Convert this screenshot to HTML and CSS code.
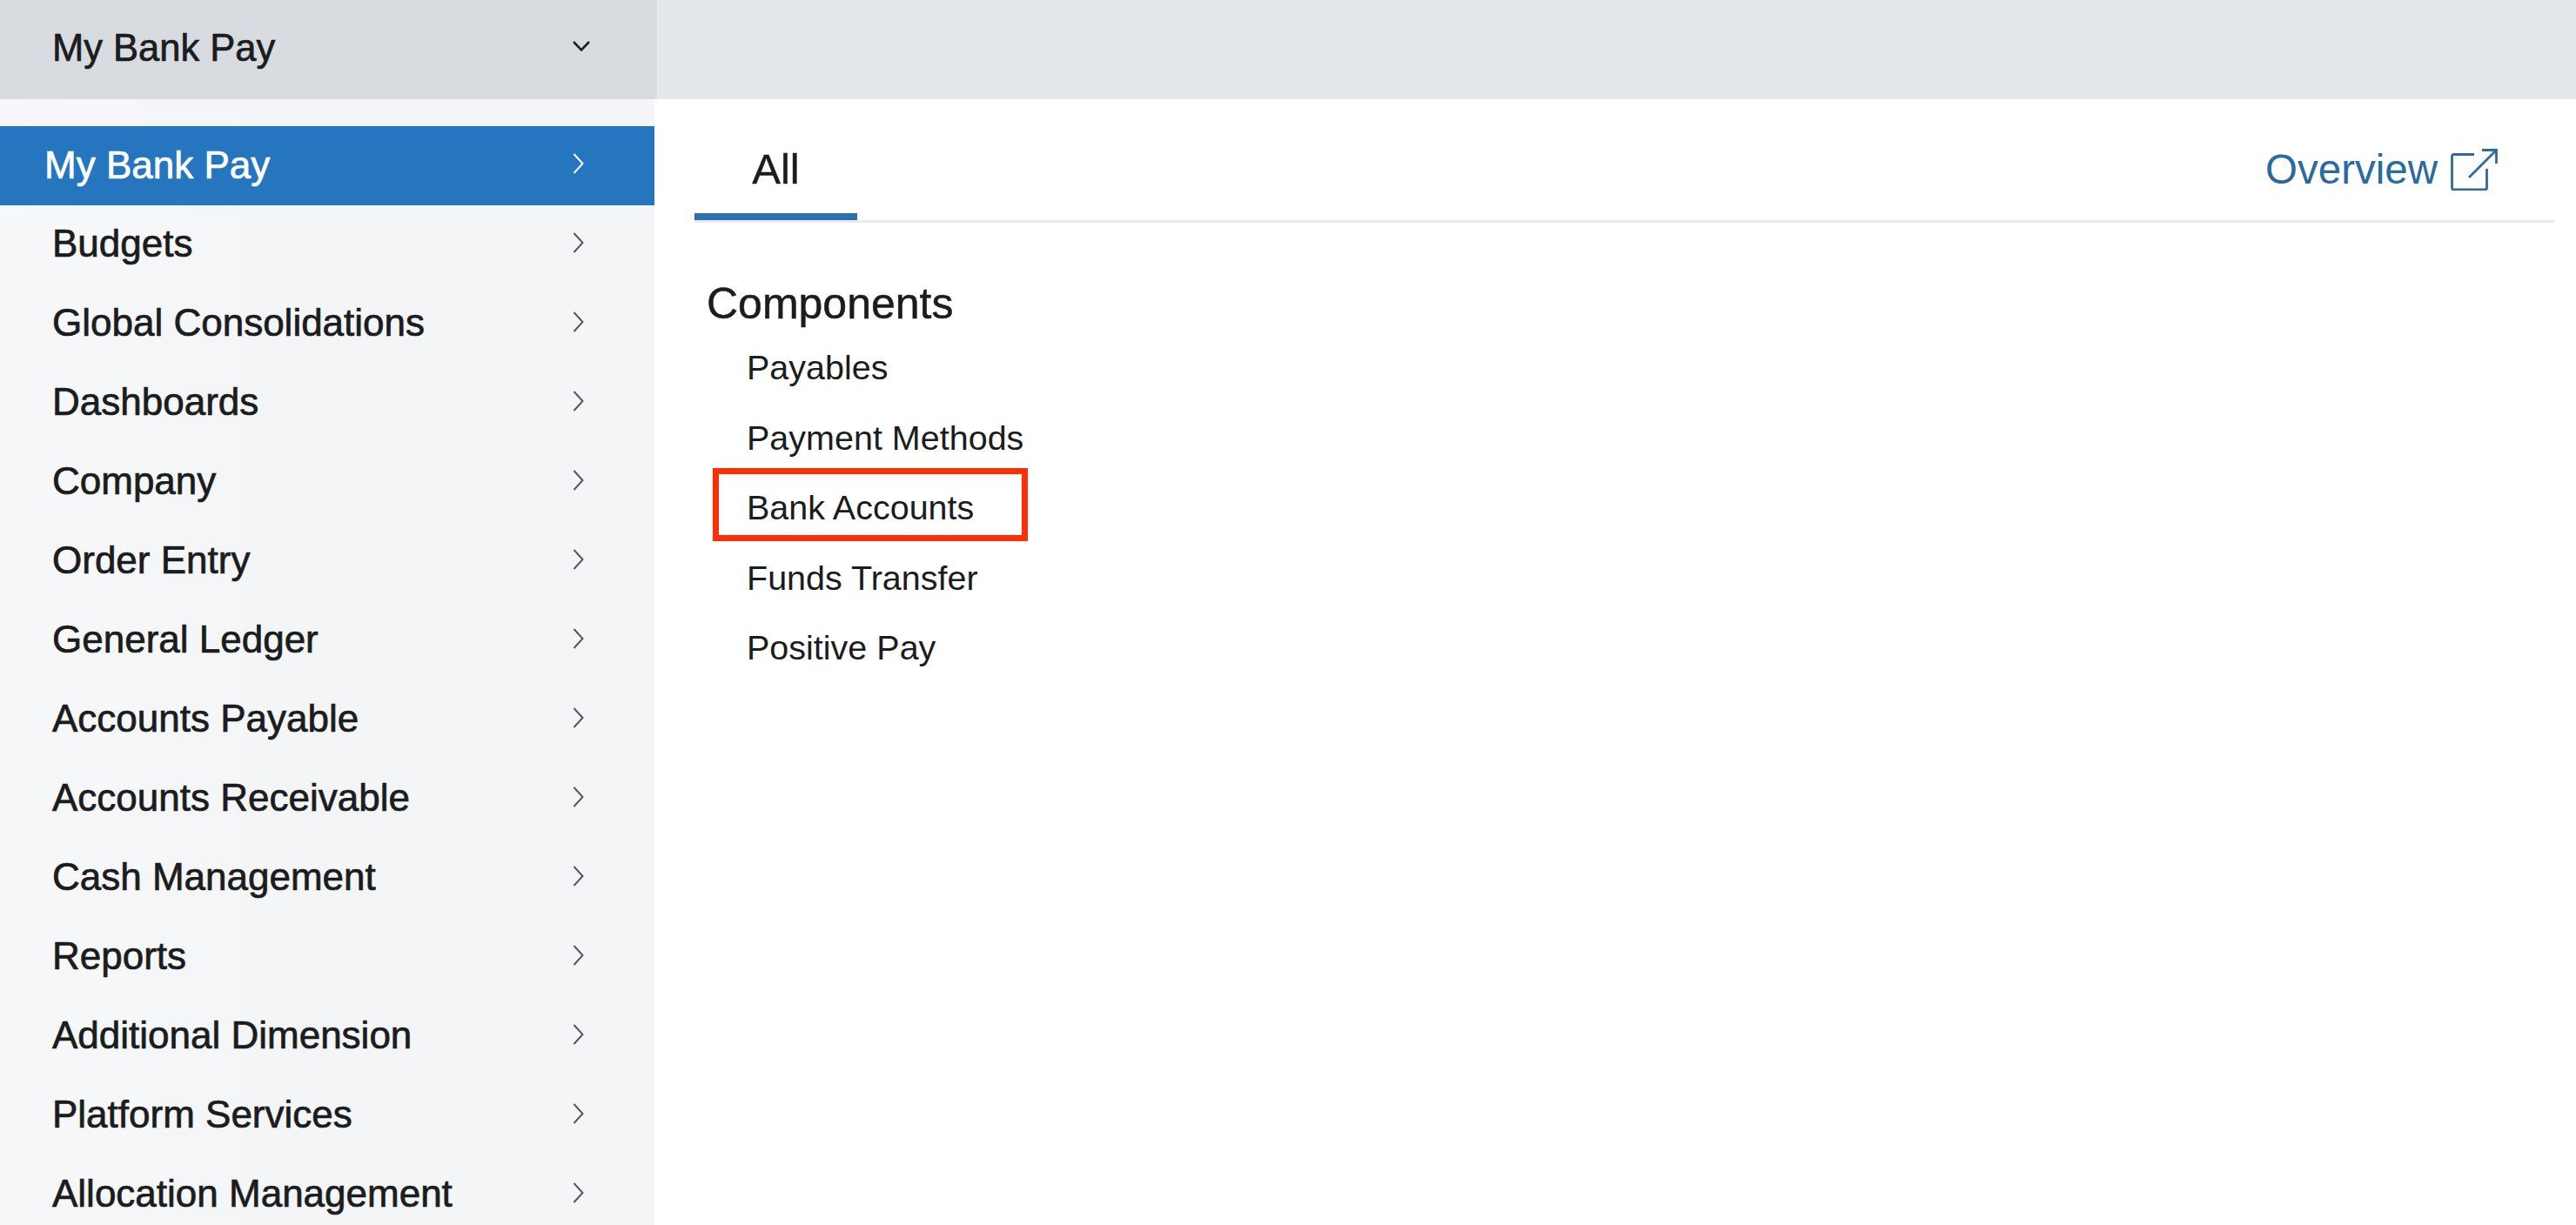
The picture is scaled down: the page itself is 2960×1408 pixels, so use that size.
FILE: index.html
```html
<!DOCTYPE html>
<html lang="en">
  <head>
    <meta charset="UTF-8" />
    <title>My Bank Pay</title>
    <link rel="stylesheet" href="styles.css">
  </head>
  <body>
    <header class="topbar">
      <div class="app-switch">
        <span class="app-name">My Bank Pay</span>
        <svg class="chevron-down" width="20" height="12" viewBox="0 0 20 12"><path d="M1 1l9 9.5L19 1" /></svg>
      </div>
      <div class="topbar-rest"></div>
    </header>

    <div class="layout">
      <nav class="sidebar">
        <a class="nav-item active"><span class="nav-label">My Bank Pay</span><svg class="chevron" width="13" height="24" viewBox="0 0 13 24"><path d="M1.500 1l10 11-10 11" /></svg></a>
        <a class="nav-item"><span class="nav-label">Budgets</span><svg class="chevron" width="13" height="24" viewBox="0 0 13 24"><path d="M1.500 1l10 11-10 11" /></svg></a>
        <a class="nav-item"><span class="nav-label">Global Consolidations</span><svg class="chevron" width="13" height="24" viewBox="0 0 13 24"><path d="M1.500 1l10 11-10 11" /></svg></a>
        <a class="nav-item"><span class="nav-label">Dashboards</span><svg class="chevron" width="13" height="24" viewBox="0 0 13 24"><path d="M1.500 1l10 11-10 11" /></svg></a>
        <a class="nav-item"><span class="nav-label">Company</span><svg class="chevron" width="13" height="24" viewBox="0 0 13 24"><path d="M1.500 1l10 11-10 11" /></svg></a>
        <a class="nav-item"><span class="nav-label">Order Entry</span><svg class="chevron" width="13" height="24" viewBox="0 0 13 24"><path d="M1.500 1l10 11-10 11" /></svg></a>
        <a class="nav-item"><span class="nav-label">General Ledger</span><svg class="chevron" width="13" height="24" viewBox="0 0 13 24"><path d="M1.500 1l10 11-10 11" /></svg></a>
        <a class="nav-item"><span class="nav-label">Accounts Payable</span><svg class="chevron" width="13" height="24" viewBox="0 0 13 24"><path d="M1.500 1l10 11-10 11" /></svg></a>
        <a class="nav-item"><span class="nav-label">Accounts Receivable</span><svg class="chevron" width="13" height="24" viewBox="0 0 13 24"><path d="M1.500 1l10 11-10 11" /></svg></a>
        <a class="nav-item"><span class="nav-label">Cash Management</span><svg class="chevron" width="13" height="24" viewBox="0 0 13 24"><path d="M1.500 1l10 11-10 11" /></svg></a>
        <a class="nav-item"><span class="nav-label">Reports</span><svg class="chevron" width="13" height="24" viewBox="0 0 13 24"><path d="M1.500 1l10 11-10 11" /></svg></a>
        <a class="nav-item"><span class="nav-label">Additional Dimension</span><svg class="chevron" width="13" height="24" viewBox="0 0 13 24"><path d="M1.500 1l10 11-10 11" /></svg></a>
        <a class="nav-item"><span class="nav-label">Platform Services</span><svg class="chevron" width="13" height="24" viewBox="0 0 13 24"><path d="M1.500 1l10 11-10 11" /></svg></a>
        <a class="nav-item"><span class="nav-label">Allocation Management</span><svg class="chevron" width="13" height="24" viewBox="0 0 13 24"><path d="M1.500 1l10 11-10 11" /></svg></a>
      </nav>

      <main class="content">
        <div class="tabs">
          <a class="tab">All</a>
          <a class="overview-link">
            <span>Overview</span>
            <svg class="external-icon" width="54" height="48" viewBox="0 0 54 48">
              <path d="M27 6.500H3.500a2 2 0 0 0-2 2V45a2 2 0 0 0 2 2h36a2 2 0 0 0 2-2V23" />
              <path d="M21 33L53 1M36 1.500h16.500V17" />
            </svg>
          </a>
        </div>

        <section class="components">
          <h2 class="section-title">Components</h2>
          <ul class="link-list">
            <li class="link-item">Payables</li>
            <li class="link-item">Payment Methods</li>
            <li class="link-item marked">Bank Accounts</li>
            <li class="link-item">Funds Transfer</li>
            <li class="link-item">Positive Pay</li>
          </ul>
        </section>
      </main>
    </div>
  </body>
</html>
```

FILE: styles.css
```css
body {
  margin: 0;
  height: 100vh;
  overflow: hidden;
  background-color: white;
  color: #1b1c1d;
  font-family: "Liberation Sans", Arial, sans-serif;
}
.topbar {
  display: flex;
  height: 114px;
}
.app-switch {
  width: 755px;
  box-sizing: border-box;
  padding: 0 77px 0 60px;
  display: flex;
  align-items: center;
  justify-content: space-between;
  background-color: #d8dce0;
}
.app-name {
  font-size: 43.500px;
  margin-bottom: 4px;
  -webkit-text-stroke: 0.7px #1b1c1d;
}
.chevron-down {
  margin-bottom: 9px;
  fill: none;
  stroke: #1f2225;
  stroke-width: 2.6;
}
.topbar-rest {
  flex: 1;
  background-color: #e5e8eb;
}
.layout {
  display: flex;
  height: calc(100vh - 114px);
}
.sidebar {
  width: 752px;
  flex-shrink: 0;
  padding-top: 31px;
  box-sizing: border-box;
  overflow: hidden;
  background: linear-gradient(90deg, #f7f8f9, #f3f5f6 40%);
}
.nav-item {
  display: flex;
  align-items: center;
  justify-content: space-between;
  height: 91px;
  box-sizing: border-box;
  padding: 0 81px 0 60px;
}
.nav-label {
  font-size: 44px;
  margin-bottom: 3px;
  -webkit-text-stroke: 0.7px #1b1c1d;
}
.chevron {
  margin-bottom: 5px;
  fill: none;
  stroke: #55585b;
  stroke-width: 2;
}
.active {
  padding-left: 51px;
  background-color: #2575bf;
  color: white;
}
.active .nav-label {
  margin-bottom: 1px;
  -webkit-text-stroke: 0.7px white;
}
.active .chevron {
  stroke: white;
}
.content {
  flex: 1;
  padding: 0 25px 0 46px;
}
.tabs {
  display: flex;
  align-items: baseline;
  border-bottom: 3px solid #e9eaeb;
}
.tab {
  width: 187px;
  box-sizing: border-box;
  padding: 52px 0 23px;
  border-bottom: 8px solid #2a70b0;
  font-size: 49px;
  line-height: 56px;
  text-align: center;
  -webkit-text-stroke: 0.4px #1b1c1d;
}
.overview-link {
  margin-left: auto;
  margin-right: 65px;
  display: flex;
  align-items: center;
  gap: 15px;
  font-size: 47.500px;
  color: #2a6aa0;
}
.external-icon {
  fill: none;
  stroke: #2f6a9c;
  stroke-width: 2.8;
}
.components {
  margin: 63px 0 0 14px;
}
.section-title {
  margin: 0 0 3px;
  font-size: 50px;
  font-weight: normal;
  line-height: 60px;
  -webkit-text-stroke: 0.5px #1b1c1d;
}
.link-list {
  margin: 0;
  padding: 0;
  list-style: none;
}
.link-item {
  position: relative;
  padding-left: 46px;
  font-size: 39.500px;
  line-height: 80.500px;
}
.marked::after {
  content: "";
  position: absolute;
  left: 7px;
  top: -5px;
  width: 362px;
  height: 84px;
  box-sizing: border-box;
  border: 7px solid #fb2e06;
}
```
